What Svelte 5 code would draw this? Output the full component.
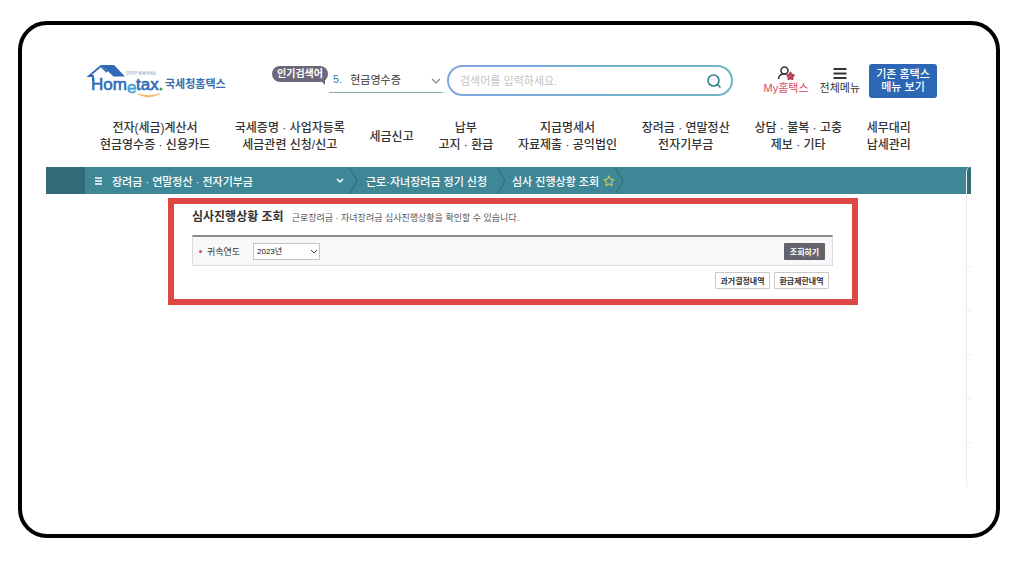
<script>
    const menus = [
        ["전자(세금)계산서", "현금영수증 · 신용카드"],
        ["국세증명 · 사업자등록", "세금관련 신청/신고"],
        ["세금신고"],
        ["납부", "고지 · 환급"],
        ["지급명세서", "자료제출 · 공익법인"],
        ["장려금 · 연말정산", "전자기부금"],
        ["상담 · 불복 · 고충", "제보 · 기타"],
        ["세무대리", "납세관리"],
    ];
    const years = ["2023", "2022", "2021"];

    let year = "2023";
    let keyword = "";
</script>

<div class="frame">
    <header>
        <a class="logo" href="#home">
            <svg width="78" height="36" viewBox="0 0 78 36" aria-hidden="true">
                <path d="M14 1 H27 L38 12.500 H26.500 Z" fill="#2f6cb5" />
                <path d="M6 17 V12 H2 L14 2 L20 8" fill="none" stroke="#2f6cb5" stroke-width="1.800" />
                <text class="tiny" x="39" y="11">인터넷 납세서비스</text>
                <text class="word" x="4" y="26">Hom</text>
                <text class="word light" x="40" y="29">e</text>
                <text class="word" x="49" y="26">tax</text>
                <circle cx="74" cy="25" r="1.500" fill="#43a447" />
                <path d="M51 30 Q62 36 73 29.500 Q63 33 51 30 Z" fill="#efb45b" stroke="#efb45b" stroke-width="0.600" />
            </svg>
            <span>국세청홈택스</span>
        </a>

        <span class="badge">인기검색어</span>
        <button class="trend">
            <span class="rank">5.</span>
            <span>현금영수증</span>
            <svg width="10" height="6" viewBox="0 0 10 6" aria-hidden="true">
                <path d="M1 1 L5 5 L9 1" fill="none" stroke="#858585" stroke-width="1.200" />
            </svg>
        </button>

        <form class="search" on:submit|preventDefault>
            <input type="text" aria-label="검색어" placeholder="검색어를 입력하세요." bind:value={keyword} />
            <button aria-label="검색">
                <svg width="16" height="16" viewBox="0 0 16 16" aria-hidden="true">
                    <circle cx="7.500" cy="7.500" r="5.500" fill="none" stroke="#36818f" stroke-width="1.600" />
                    <path d="M11.500 11.500 L14.500 14.500" stroke="#36818f" stroke-width="1.600" />
                </svg>
            </button>
        </form>

        <div class="links">
            <a class="my" href="#my">
                <svg width="18" height="16" viewBox="0 0 18 16" aria-hidden="true">
                    <circle cx="7.500" cy="5.500" r="3.500" fill="none" stroke="#35354a" stroke-width="1.600" />
                    <path d="M1.500 14 Q2 9.500 6 9 L9 9" fill="none" stroke="#35354a" stroke-width="1.600" />
                    <path d="M13.500 7.500 L14.700 9.600 L17 10.100 L15.500 12 L15.700 14.300 L13.500 13.400 L11.300 14.300 L11.500 12 L10 10.100 L12.300 9.600 Z" fill="#d0506a" stroke="#b03c58" stroke-width="1.600" stroke-linejoin="round" />
                </svg>
                <span>My홈택스</span>
            </a>
            <a href="#all">
                <svg width="14" height="16" viewBox="0 0 14 16" aria-hidden="true">
                    <path d="M0.500 4 H13.500 M0.500 8.500 H13.500 M0.500 13 H13.500" stroke="#333" stroke-width="1.800" />
                </svg>
                <span>전체메뉴</span>
            </a>
        </div>
        <button class="classic">기존 홈택스<br />메뉴 보기</button>
    </header>

    <nav class="menu">
        {#each menus as lines}
            <a href="#menu">
                {#each lines as line}
                    <span>{line}</span>
                {/each}
            </a>
        {/each}
    </nav>

    <div class="body">
        <div class="path">
            <button class="current">
                <svg width="7" height="8" viewBox="0 0 7 8" aria-hidden="true">
                    <path d="M0 1 H7 M0 4 H7 M0 7 H7" stroke="#fff" stroke-width="1.300" />
                </svg>
                <span>장려금 · 연말정산 · 전자기부금</span>
                <svg class="down" width="8" height="6" viewBox="0 0 8 6" aria-hidden="true">
                    <path d="M1 1 L4 4 L7 1" fill="none" stroke="#fff" stroke-width="1.500" />
                </svg>
            </button>
            <svg width="9" height="26" viewBox="0 0 9 26" aria-hidden="true">
                <path d="M0.500 0 L8 13 L0.500 26" fill="none" stroke="#2c6977" />
            </svg>
            <a class="step" href="#apply">근로·자녀장려금 정기 신청</a>
            <svg width="9" height="26" viewBox="0 0 9 26" aria-hidden="true">
                <path d="M0.500 0 L8 13 L0.500 26" fill="none" stroke="#2c6977" />
            </svg>
            <a class="step last" href="#status">심사 진행상황 조회</a>
            <button class="star" aria-label="즐겨찾기">
                <svg width="12" height="12" viewBox="0 0 12 12" aria-hidden="true">
                    <path d="M6 1 L7.500 4.200 L11 4.600 L8.500 7 L9.100 10.600 L6 8.900 L2.900 10.600 L3.500 7 L1 4.600 L4.500 4.200 Z" fill="none" stroke="#b9c468" stroke-width="1.200" stroke-linejoin="round" />
                </svg>
            </button>
            <svg width="9" height="26" viewBox="0 0 9 26" aria-hidden="true">
                <path d="M0.500 0 L8 13 L0.500 26" fill="none" stroke="#2c6977" />
            </svg>
        </div>

        <main>
            <div class="title">
                <h1>심사진행상황 조회</h1>
                <p>근로장려금 · 자녀장려금 심사진행상황을 확인할 수 있습니다.</p>
            </div>
            <div class="filter">
                <label for="year">귀속연도</label>
                <div class="select">
                    <select id="year" bind:value={year}>
                        {#each years as y}
                            <option value={y}>{y}년</option>
                        {/each}
                    </select>
                    <svg width="8" height="5" viewBox="0 0 8 5" aria-hidden="true">
                        <path d="M1 1 L4 4 L7 1" fill="none" stroke="#444" />
                    </svg>
                </div>
                <button class="submit">조회하기</button>
            </div>
            <div class="actions">
                <button>과거결정내역</button>
                <button>환급제한내역</button>
            </div>
        </main>

        <div class="drawer">
            <i></i><i></i><i></i><i></i><i></i>
        </div>
    </div>
</div>

<style>
    :global(body) {
        background: #fff;
        font-family: "Liberation Sans", "Noto Sans CJK KR", sans-serif;
    }

    .frame {
        box-sizing: border-box;
        min-height: calc(100vh - 50px);
        margin: 21px 24px 29px 18px;
        padding: 39px 25px 0 24px;
        border: 4px solid #000;
        border-radius: 29px;
        color: #333;
        font-size: 11px;
        white-space: nowrap;
    }

    button,
    input,
    select {
        padding: 0;
        border: 0;
        background: none;
        color: inherit;
        font: inherit;
    }

    a {
        color: inherit;
        text-decoration: none;
    }

    svg {
        display: block;
        flex: none;
    }

    header {
        display: flex;
        align-items: flex-start;
        padding: 0 34px 0 41px;
    }

    .logo {
        display: flex;
        width: 185px;
        height: 40px;
        color: #3a6dab;
        font-size: 11px;
        font-weight: 700;
        line-height: 40px;
    }

    .word {
        font-family: "Liberation Sans", sans-serif;
        font-size: 17px;
        font-weight: 400;
        fill: #2f6cb5;
        stroke: #2f6cb5;
        stroke-width: 0.6px;
    }

    .light {
        fill: #42a5d8;
        stroke: #42a5d8;
    }

    .tiny {
        font-size: 4px;
        font-weight: 400;
        fill: #5c86b8;
    }

    .badge {
        position: relative;
        width: 56px;
        margin-top: 2px;
        border-radius: 8px;
        background: #6b687c;
        color: #fff;
        font-size: 10px;
        font-weight: 700;
        line-height: 16px;
        text-align: center;
    }

    .badge::after {
        content: "";
        position: absolute;
        right: 3px;
        bottom: -3px;
        border-top: 6px solid #6b687c;
        border-left: 6px solid transparent;
    }

    .trend {
        display: flex;
        align-items: center;
        gap: 8px;
        width: 114px;
        height: 29px;
        margin: 0 4px 0 1px;
        padding: 2px 2px 0 4px;
        border-bottom: 1px solid #7fadb0;
    }

    .trend svg {
        margin: 3px 0 0 auto;
    }

    .rank {
        color: #3c829a;
    }

    .search {
        display: flex;
        flex: 1;
        align-items: center;
        box-sizing: border-box;
        height: 31px;
        margin-top: 1px;
        padding: 0 9px 0 11px;
        border: 2px solid transparent;
        border-radius: 16px;
        background:
            linear-gradient(#fff, #fff) padding-box,
            linear-gradient(90deg, #7ea6df, #6db4c3) border-box;
    }

    .search input {
        flex: 1;
        min-width: 0;
        outline: none;
    }

    .search input::placeholder {
        color: #c4c4c4;
    }

    .links {
        display: flex;
        gap: 11px;
        margin: 1px 9px 0 30px;
        line-height: 14px;
    }

    .links a {
        display: flex;
        flex-direction: column;
        align-items: center;
    }

    .links .my {
        color: #d94c66;
    }

    .classic {
        width: 68px;
        height: 34px;
        border-radius: 3px;
        background: #2b67b4;
        color: #fff;
        font-weight: 500;
        line-height: 13px;
    }

    .menu {
        display: flex;
        align-items: center;
        justify-content: space-between;
        padding: 16px 60px 13px 54px;
        font-size: 12px;
        font-weight: 500;
        line-height: 17px;
        text-align: center;
    }

    .menu span {
        display: block;
        height: 17px;
    }

    .body {
        position: relative;
    }

    .path {
        display: flex;
        align-items: center;
        height: 27px;
        border-left: 39px solid #326b79;
        background: #3e8796;
        color: #fff;
        font-weight: 500;
    }

    .current {
        display: flex;
        align-items: center;
        gap: 10px;
        width: 264px;
        padding: 0 5px 0 10px;
    }

    .down {
        margin-left: auto;
    }

    .step {
        width: 131px;
        padding-left: 8px;
    }

    .last {
        width: auto;
        padding-left: 6px;
    }

    .star {
        margin-left: 4px;
    }

    main {
        margin: 4px 113px 0 122px;
        padding: 4px 19px 10px 18px;
        border: 6px solid #df4744;
    }

    .title {
        display: flex;
        align-items: baseline;
        gap: 8px;
        height: 18px;
        line-height: 18px;
    }

    h1 {
        margin: 0;
        font-size: 12px;
        font-weight: 700;
    }

    p {
        margin: 0;
        color: #555;
        font-size: 9px;
    }

    .filter {
        display: flex;
        align-items: center;
        height: 28px;
        margin-top: 9px;
        border: 1px solid #dcdcdc;
        border-top: 2px solid #8c8c8c;
        background: #f8f8f8;
        padding: 0 7px 0 6px;
    }

    label {
        display: flex;
        align-items: center;
        gap: 5px;
        width: 54px;
        font-size: 9px;
    }

    label::before {
        content: "";
        width: 3px;
        height: 3px;
        border-radius: 50%;
        background: #dc4a4a;
    }

    .select {
        position: relative;
    }

    select {
        display: block;
        box-sizing: border-box;
        width: 67px;
        height: 17px;
        padding: 0 3px;
        border: 1px solid #c3c3c3;
        background: #fff;
        color: #111;
        font-size: 8px;
        appearance: none;
    }

    .select svg {
        position: absolute;
        top: 6px;
        right: 2px;
        pointer-events: none;
    }

    .submit {
        width: 41px;
        height: 17px;
        margin-left: auto;
        border-radius: 1px;
        background: #62646d;
        color: #fff;
        font-size: 8px;
        font-weight: 700;
    }

    .actions {
        display: flex;
        justify-content: flex-end;
        gap: 4px;
        margin-top: 6px;
        padding-right: 4px;
    }

    .actions button {
        width: 55px;
        height: 17px;
        border: 1px solid #c9c9c9;
        border-radius: 1px;
        font-size: 8px;
        font-weight: 700;
    }

    .drawer {
        position: absolute;
        top: 0;
        right: 0;
        display: flex;
        flex-direction: column;
        gap: 43px;
        box-sizing: border-box;
        width: 5px;
        height: 322px;
        padding-top: 99px;
        border-left: 1px solid #ececec;
        border-radius: 5px 0 0 5px;
        background: linear-gradient(#326b79 27px, transparent 27px);
    }

    .drawer i {
        height: 1px;
        background: #eee;
    }
</style>
